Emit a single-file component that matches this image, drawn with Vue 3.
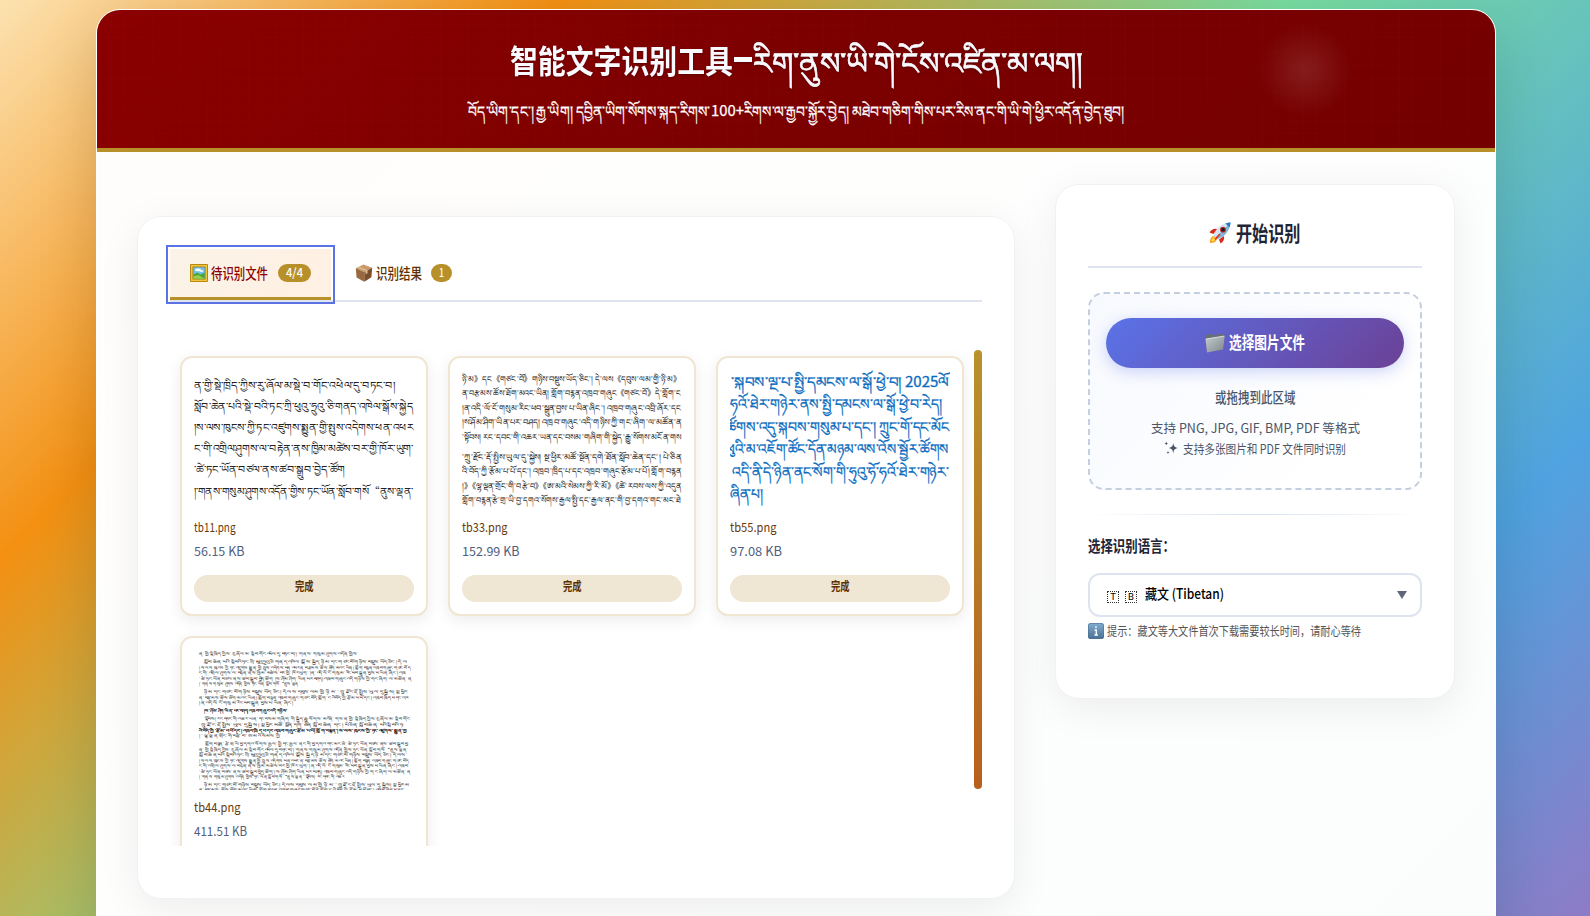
<script setup>
import { h } from 'vue'

// One line of text set to an exact advance width.
const Fit = (p) =>
  h('svg', { width: p.w, height: p.lh, viewBox: `0 0 ${p.w} ${p.lh}`, style: { display: 'block', overflow: 'visible', flex: 'none' } }, [
    h('text', { x: 0, y: p.y, 'font-size': p.s, textLength: p.w, lengthAdjust: 'spacingAndGlyphs', fill: 'currentColor' }, p.t),
  ])
Fit.props = ['t', 's', 'w', 'lh', 'y']

const line = (t, y, w = 219, x = 0, b = 400) => ({ t, y, w, x, b })

const page1 = [
  line('ན་གྱི་སྡེ་ཁྲིད་ཀྱིས་རུ་ཞོལ་མ་སྡེ་བ་གོང་འཕེལ་དུ་བཏང་བ།', 18.5, 201),
  line('སློབ་ཆེན་པའི་སྡེ་བའི་ཏང་ཀྲི་ཕུའུ་ཧྲུའུ་ཅི་གནད་འཁེལ་སྒོས་སྐྱེད', 39.8),
  line('།ས་ལས་ཁུངས་ཀྱི་ཏང་འཛུགས་སྨྱུན་གྱི་སྤུས་འདེགས་ཕན་འཕར', 61),
  line('ང་གི་འགྲིལ་ཤུགས་ལ་བརྟེན་ནས་ཁྱིམ་མཚེས་བར་གྱི་ཁོར་ཡུག་', 82),
  line('་ཚེ་ཏང་ཡོན་བཙལ་ནས་ཚབ་སྒྲུབ་བྱེད་ཚོག', 103, 151),
  line('།་གནས་གསུམ་ཤུགས་འདོན་གྱིས་ཏང་ཡོན་སློབ་གསོ“ནུས་ལྡན་', 124.5),
]
const page2 = [
  line('ཉི་མ》དང《གཙང་བོ》གཉིས་བསྡུས་ཡོད་ཅིང་། དེ་ལས《དབུས་ལམ་གྱི་ཉི་མ》', 11.7),
  line('ན་བརྩམས་ཚོས་ཐོག་མའང་ཡིན། གློག་བརྙན་འཁྲབ་གཞུང《གཙང་བོ》དེ་གློག་ང', 25.9),
  line('།ན་འདི་ལོ་ངོ་གསུམ་རིང་ཕབ་སྒྲུན་བྱས་པ་ཡིན་ཞིང་། འཁྲབ་གཞུང་འབྲི་ཞོར་དང', 40.5),
  line('།ས་ཤོམ་ཤིག་ཡིན་པར་བཤད། འཁྲབ་གཞུང་འདི་གཉིས་ཀྱི་གང་ཞིག་ལ་མཚོན་ན', 55.2),
  line('་སྟོབས། རང་དབང་གི་འཆར་ཡན་དང་བསམ་གཞིག་གི་སྐྱེད་རྒྱུ་སོགས་མངོན་གས', 69.7),
  line('་ཀྲུ་རྫོང་རྡོ་སྤྱིས་ཡུལ་དུ་སྐྱེས། སྔ་ཕྱིར་མཚོ་སྔོན་དགེ་ཐོན་སློབ་ཆེན་དང་། པེ་ཅིན', 89.5),
  line('འི་བོད་ཀྱི་རྩོམ་པ་པོ་དང་། འཁྲབ་ཁྲིད་པ་དང་འཁྲབ་གཞུང་རྩོམ་པ་པོ། གློག་བརྙན', 104),
  line('།》《ལྷ་ལྡན་གྲོང་གི་བརྩེ་བ》《ཨ་མའི་སེམས་ཀྱི་རི་མོ》《ཚེ་རབས་ལས་ཀྱི་འདུན', 118.5),
  line('གློག་བརྙན་རྩེ་གྲ་ཡི་བྱ་དགའ་སོགས་རྒྱལ་སྤྱི་དང་རྒྱལ་ནང་གི་བྱ་དགའ་གང་མང་ཐེ', 133),
]
const page3 = [
  line('་སྐབས་ལྔ་པ་སྤྱི་དམངས་ལ་སྒོ་ཕྱེ་བ། 2025ལོ', 16.7, 218, 1),
  line('ཧའོ་ཐེར་གཉེར་ནས་སྤྱི་དམངས་ལ་སྒོ་ཕྱེ་བ་རེད།', 39.3, 212),
  line('ཚོགས་འདུ་སྐབས་གསུམ་པ་དང་། ཀྲུང་གོ་དང་མོང', 61.7, 223, -4),
  line('ཕུའི་མ་འཇོག་ཚོང་དོན་མཉམ་ལས་འོས་སྦྱོར་ཚོགས', 84.3, 223, -4),
  line('འདི་ནི་དེ་ཉིན་ནང་སོག་གི་ཧུའུ་ཧོ་ཧའོ་ཐེར་གཉེར་', 106.7, 217, 2),
  line('ཞིན་པ།', 129, 33, 0),
]
const body = [...page1, ...page2].map((l) => l.t)
const rows4 = [
  [86, 88, 565], [111, 102, 712, 1], [128, 88, 720], [144, 88, 708, 1], [160, 88, 725], [176, 88, 390],
  [200, 102, 714, 1], [217, 88, 716], [234, 88, 370, 1], [258, 102, 353, 2], [282, 102, 722, 1], [299, 88, 700],
  [316, 88, 713, 2], [332, 88, 335], [356, 104, 712], [373, 88, 714], [390, 88, 712], [406, 88, 716, 1],
  [423, 88, 716], [440, 88, 722], [456, 88, 522], [479, 102, 718, 1], [493, 88, 705],
]
const page4 = rows4.map(([y, a, b, k = 0], i) => {
  const w = (b - a) / 3
  const t = (body[i % body.length] + '་' + body[(i + 5) % body.length]).replace(/[《》]/g, '་').slice(0, Math.round(w * 0.5))
  return line(t, y / 3 - 23.6, w, a / 3 - 24, k === 2 ? 700 : 400)
})

const files = [
  { name: 'tb11.png', nw: 41.5, size: '56.15 KB', sw: 50.5, lines: page1, cls: 'ink-a' },
  { name: 'tb33.png', nw: 45.5, size: '152.99 KB', sw: 57.5, lines: page2, cls: 'ink-b' },
  { name: 'tb55.png', nw: 46.5, size: '97.08 KB', sw: 52, lines: page3, cls: 'ink-c' },
  { name: 'tb44.png', nw: 46.5, size: '411.51 KB', sw: 53, lines: page4, cls: 'ink-d' },
]
</script>

<template>
  <div class="page">
    <div class="shell">
      <header class="head">
        <i class="glow"></i>
        <h1 class="title">
          <Fit t="智能文字识别工具" :s="32" :w="223" :lh="46" :y="33" />
          <i class="dash"></i>
          <Fit t="རིག་ནུས་ཡི་གེ་ངོས་འཛིན་མ་ལག།" :s="30" :w="330" :lh="46" :y="34" />
        </h1>
        <p class="sub">
          <Fit t="བོད་ཡིག་དང་། རྒྱ་ཡིག།  དབྱིན་ཡིག་སོགས་སྐད་རིགས་" :s="15" :w="242" :lh="22" :y="17" />
          <Fit t="100+" :s="15" :w="33" :lh="22" :y="16" />
          <Fit t="རིགས་ལ་རྒྱབ་སྐྱོར་བྱེད། མཐེབ་གཅིག་གིས་པར་རིས་ནང་གི་ཡི་གེ་ཕྱིར་འདོན་བྱེད་ཐུབ།" :s="15" :w="380" :lh="22" :y="17" />
        </p>
      </header>

      <main class="cols">
        <section class="panel files">
          <nav class="tabs">
            <button class="tab on">
              <svg class="ic" width="18" height="18" viewBox="0 0 18 18">
                <rect width="18" height="18" rx="1" fill="#b9860f" /><rect x="1" y="1" width="16" height="16" fill="#efc63c" />
                <rect x="2.6" y="2.6" width="12.8" height="12.8" fill="#8a6a14" /><rect x="3.3" y="3.3" width="11.4" height="11.4" fill="#6fc3f0" />
                <path d="M3.3 11 7 8.6l3.4 1.8 4.3-1.6v5.9H3.3z" fill="#4fa32e" /><path d="M3.3 14.7v-2.4l5-1.4 6.4 3.8z" fill="#94cf4e" />
                <ellipse cx="8" cy="5.9" rx="3" ry="1.3" fill="#fff" /><ellipse cx="11.5" cy="7" rx="2" ry=".9" fill="#e9f6ff" />
              </svg>
              <Fit class="t1" t="待识别文件" :s="14.5" :w="57" :lh="18" :y="14.5" />
              <span class="badge"><Fit t="4/4" :s="12" :w="17" :lh="18" :y="13" /></span>
            </button>
            <button class="tab">
              <svg class="ic" width="18" height="18" viewBox="0 0 18 18">
                <path d="M.8 4.2 8.4.5l8.8 3.2-7.9 4.4z" fill="#c99a6b" /><path d="M.8 4.2 9.3 8v9.7L1.6 13.4z" fill="#9a683e" />
                <path d="M9.3 8l7.9-4.3-.8 9.5-7.1 4.5z" fill="#7b4e2c" /><path d="M4 2.7l8.500 3.6v3l-1.900 1V7L2.300 3.500z" fill="#e0bd90" />
              </svg>
              <Fit class="t2" t="识别结果" :s="14.5" :w="46" :lh="18" :y="14.5" />
              <span class="badge one"><Fit t="1" :s="12" :w="5" :lh="18" :y="13" /></span>
            </button>
          </nav>

          <div class="list">
            <article v-for="f in files" :key="f.name" class="card">
              <svg class="thumb" :class="f.cls" width="220" height="140" viewBox="0 0 220 140">
                <text v-for="(l, i) in f.lines" :key="i" :x="l.x" :y="l.y" :textLength="l.w" :font-weight="l.b" lengthAdjust="spacingAndGlyphs">{{ l.t }}</text>
              </svg>
              <Fit class="name" :t="f.name" :s="12.5" :w="f.nw" :lh="18" :y="13" />
              <Fit class="size" :t="f.size" :s="12.5" :w="f.sw" :lh="18" :y="13" />
              <div class="done"><Fit t="完成" :s="12.5" :w="18.5" :lh="18" :y="13" /></div>
            </article>
            <i class="thumbbar"></i>
          </div>
        </section>

        <aside class="panel side">
          <h2 class="stitle">
            <svg width="22" height="22" viewBox="0 0 22 22">
              <path d="M1 21c0-4 1-6.500 4-7l3 3c-1 3-3.500 4-7 4z" fill="#f79a1c" /><path d="M2.600 19.500c.2-2.300 1-4 2.800-4.200l1.400 1.400c-.5 1.600-2 2.700-4.200 2.800z" fill="#ffe04a" />
              <path d="M.5 10.500C2.500 7.500 5 6.300 8 7l-3.500 5zM11.500 21.500c3-2 4.200-4.500 3.500-7.500l-5 3.500z" fill="#d9291c" />
              <path d="M5 13.500C7.500 6.500 12.500 1.500 21.500.5c-.8 8.500-5.500 14-12.800 16.800z" fill="#86b4d8" />
              <path d="M5 13.500C7.500 6.500 12.500 1.500 21.500.5L6.700 15.500z" fill="#d4e6f4" />
              <path d="M16.500 1.600c1.600-.6 3.200-1 5-1.100-.1 1.800-.5 3.400-1 5z" fill="#2a78c2" />
              <circle cx="14" cy="7.700" r="2.900" fill="#c8281e" /><circle cx="14" cy="7.700" r="1.900" fill="#1b2130" />
              <path d="M6 17.500l5-5.500" stroke="#e3341f" stroke-width="1.800" />
            </svg>
            <Fit t="开始识别" :s="21" :w="64.500" :lh="24" :y="18.500" />
          </h2>
          <div class="drop">
            <button class="pick">
              <svg width="20" height="20" viewBox="0 0 20 20">
                <defs><linearGradient id="fold" x1="0" y1="0" x2="1" y2="1"><stop offset="0" stop-color="#c6ccce" /><stop offset="1" stop-color="#7d868a" /></linearGradient></defs>
                <path d="M.3 3.200.9 2 7.200 1l1.200 1.200L18.200.6l1 1-.5 12.400L2 18z" fill="#666f73" /><path d="M.5 6 19.700 3 18 16.500 2 19.500z" fill="url(#fold)" />
                <path d="M.8 6 19.300 3.100" stroke="#e8ecee" stroke-width=".8" />
              </svg>
              <Fit t="选择图片文件" :s="16.500" :w="76" :lh="20" :y="16" />
            </button>
            <Fit class="l1" t="或拖拽到此区域" :s="14.500" :w="80.500" :lh="18" :y="14" />
            <Fit class="l2" t="支持 PNG, JPG, GIF, BMP, PDF 等格式" :s="12.500" :w="209" :lh="16" :y="12.500" />
            <div class="l3">
              <svg width="15" height="14" viewBox="0 0 15 14" fill="#4a5568">
                <path d="M9.300 1.500c.3 3.500 1 4.800 4.700 5.500-3.700.7-4.400 2-4.700 6-.4-4-1-5.300-4.800-6 3.800-.7 4.400-2 4.800-5.500z" />
                <path d="M2.300.2c.2 1.500.5 1.900 1.900 2.200-1.400.3-1.700.7-1.900 2.200C2.100 3.100 1.800 2.700.4 2.400 1.800 2.100 2.100 1.700 2.300.2zM4 9.800c.2 1.200.4 1.500 1.500 1.800-1.100.2-1.300.6-1.500 1.800-.2-1.200-.4-1.600-1.500-1.800C3.600 11.300 3.800 11 4 9.800z" />
              </svg>
              <Fit t="支持多张图片和 PDF 文件同时识别" :s="12.500" :w="163" :lh="16" :y="12.500" />
            </div>
          </div>
          <i class="rule"></i>
          <Fit class="lab" t="选择识别语言：" :s="15.500" :w="87" :lh="20" :y="15" />
          <div class="select">
            <span class="flag">T</span><span class="flag">B</span>
            <Fit class="lang" t="藏文 (Tibetan)" :s="14" :w="79" :lh="18" :y="13" />
            <i class="arrow"></i>
          </div>
          <div class="hint">
            <svg width="16" height="16" viewBox="0 0 16 16">
              <defs><linearGradient id="inf" x1="0" y1="0" x2="0" y2="1"><stop offset="0" stop-color="#82aed0" /><stop offset="1" stop-color="#496f94" /></linearGradient></defs>
              <rect width="16" height="16" rx="2.500" fill="url(#inf)" /><rect x=".5" y=".5" width="15" height="15" rx="2" fill="none" stroke="#4d7090" stroke-opacity=".6" />
              <path d="M8 3.300v1.600M6.600 7H8.300v5M6.400 12h3.500" stroke="#fff" stroke-width="1.400" fill="none" />
            </svg>
            <Fit t="提示：藏文等大文件首次下载需要较长时间，请耐心等待" :s="12.500" :w="254" :lh="16" :y="12.500" />
          </div>
        </aside>
      </main>
    </div>
  </div>
</template>

<style>
html, body { margin: 0; overflow: hidden; }
</style>
<style scoped>
* { box-sizing: border-box; }
.page {
  height: 916px; overflow: hidden; padding: 9px 94px 0 96px;
  font-family: "Noto Sans CJK SC", "Noto Sans", sans-serif;
  background: linear-gradient(135deg, #fce2b0 0, #f39012 396px, #78dca0 914px, #4fa3e0 1431px, #8e7bc6 1772px);
}
.shell {
  height: 1200px; border: 1px solid #fff; border-radius: 24px; overflow: hidden;
  background: linear-gradient(135deg, #fffdfb 0, #fefefd 30%, #fbfdfd 100%);
  box-shadow: 0 20px 60px rgba(0, 0, 0, .15);
}
.head {
  position: relative; height: 142px; border-bottom: 4px solid #b8902a; padding-top: 30px;
  background:
    repeating-linear-gradient(90deg, rgba(255,255,255,.008) 0 1px, transparent 1px 13.700px),
    repeating-linear-gradient(0deg, rgba(255,255,255,.008) 0 1px, transparent 1px 13.700px),
    linear-gradient(135deg, #8b0000, #7c0000 50%, #740000);
  display: flex; flex-direction: column; align-items: center; color: #fff;
}
.glow {
  position: absolute; left: 1158px; top: 10px; width: 100px; height: 100px; border-radius: 50%;
  background: radial-gradient(circle closest-side, rgba(255,255,255,.11), transparent 94%);
}
.title { margin: 0; display: flex; font-weight: 700; color: #f8faff; filter: drop-shadow(0 1px 1px rgba(0,0,0,.3)); }
.title svg:last-child { font-weight: 400; stroke: currentColor; stroke-width: .7; }
.dash { width: 18px; height: 4.500px; background: #f8faff; margin: 17px 1px 0 1px; }
.sub { margin: 14px 0 0; display: flex; gap: .5px; color: #fff; font-weight: 400; }
.sub svg { stroke: currentColor; stroke-width: .25; }
.cols { display: flex; align-items: flex-start; padding: 32px 40px 0 40px; gap: 40px; }
.panel { background: #fff; border: 1px solid #f0f1f3; border-radius: 24px; box-shadow: 0 10px 40px rgba(0,0,0,.07); }
.files { width: 878px; height: 683px; margin-top: 32px; padding: 32px 32px 0; }
.tabs { height: 53px; border-bottom: 2px solid #dfe5f0; display: flex; }
button { border: 0; font: inherit; padding: 0; background: none; }
.tab { height: 51px; flex: none; display: flex; align-items: center; padding: 0 20px; color: #5c2e00; border-bottom: 3px solid transparent; }
.tab .ic { margin-right: 3px; }
.tab + .tab { margin-left: 4px; }
.on {
  width: 161px; background: linear-gradient(135deg, #fbf3e8, #fff0e2); border-bottom-color: #b8902a;
  color: #8b0000; outline: 2px solid #5a72e4; outline-offset: 2px;
}
.t1, .t2 { font-weight: 500; }
.badge { height: 18px; border-radius: 10px; background: #b8902a; color: #fff; padding: 0 8px; margin-left: 10px; font-weight: 500; }
.one { margin-left: 9px; }
.list {
  position: relative; margin-top: 48px; height: 496px; overflow: hidden; padding: 6px 18px 0 10px;
  display: grid; grid-template-columns: repeat(3, 248px); grid-auto-rows: 260px; gap: 20px;
}
.card { background: #fff; border: 2px solid #f0e6d2; border-radius: 12px; padding: 12px; box-shadow: 0 4px 15px rgba(0,0,0,.08); }
.thumb { display: block; overflow: hidden; }
.ink-a { font-size: 10.200px; fill: #222; }
.ink-b { font-size: 8px; fill: #111; }
.ink-c { font-size: 14.200px; fill: #0b6cbf; stroke: #0b6cbf; stroke-width: .3; }
.ink-d { font-size: 3.800px; fill: #000; }
.name { margin: 9px 0 0 0; color: #6b3a0c; }
.size { margin: 6px 0 0 0; color: #4f6080; }
.done { margin-top: 14px; height: 27px; border-radius: 14px; background: #efe6d3; color: #5c2e00; display: flex; justify-content: center; padding-top: 3px; padding-bottom: 6px; font-weight: 700; }
.thumbbar { position: absolute; right: 0; top: 0; width: 8px; height: 439px; border-radius: 4px; background: linear-gradient(#b8922a, #b8601e); }
.side { width: 400px; height: 515px; padding: 31px 32px; }
.stitle { margin: 0; height: 52px; padding-top: 6px; display: flex; justify-content: center; gap: 5px; border-bottom: 2px solid #dfe3f2; color: #1e2536; font-weight: 700; }
.drop {
  margin-top: 24px; height: 198px; border: 2px dashed #c3cfdf; border-radius: 16px; padding: 24px 16px 0;
  background: linear-gradient(135deg, #f7f9fe, #fff 80%); display: flex; flex-direction: column; align-items: center; color: #4a5568;
}
.pick {
  width: 298px; height: 50px; flex: none; border-radius: 25px; color: #fff; font-weight: 700; display: flex; align-items: center; justify-content: center; gap: 4px;
  background: linear-gradient(135deg, #5a73e8, #6b4196); box-shadow: 0 4px 15px rgba(90,115,232,.3);
}
.l1 { margin-top: 21px; font-weight: 500; }
.l2 { margin-top: 13px; }
.l3 { margin-top: 5px; display: flex; gap: 4px; }
.rule { display: block; margin-top: 24px; height: 1px; background: linear-gradient(90deg, transparent, #d5e0f0, transparent); }
.lab { margin-top: 22px; color: #1e2536; font-weight: 600; }
.select { margin-top: 16px; height: 44px; border: 2px solid #dde4f0; border-radius: 12px; display: flex; align-items: center; padding: 0 13px 0 17px; color: #000; }
.flag { width: 12px; height: 12px; border: 1px dotted #333; font: 9.500px/10.500px Roboto, sans-serif; text-align: center; margin: 4px 6px 0 0; }
.lang { margin-left: 2px; font-weight: 500; }
.arrow { margin-left: auto; border: 5.500px solid transparent; border-top: 8px solid #5f6777; border-bottom: 0; }
.hint { margin-top: 6px; display: flex; gap: 3px; color: #555; }
</style>
